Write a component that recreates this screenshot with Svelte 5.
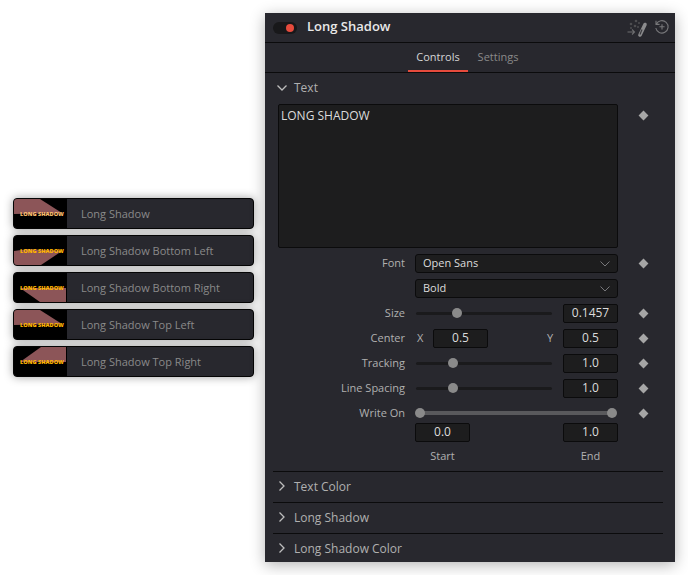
<script>
  const presets = [
    { name: 'Long Shadow', points: '0,0 26,0 48,14 0,15', pale: true },
    { name: 'Long Shadow Bottom Left', points: '0,15 14,13 48,15 27,29 0,29' },
    { name: 'Long Shadow Bottom Right', points: '6,15 26,29 52,29 52,15' },
    { name: 'Long Shadow Top Left', points: '0,0 26,0 48,14 0,15' },
    { name: 'Long Shadow Top Right', points: '6,15 27,0 52,0 52,15' }
  ];
  const sliders = [
    { label: 'Tracking', value: '1.0', pos: 27 },
    { label: 'Line Spacing', value: '1.0', pos: 27 }
  ];
  const closed = ['Text Color', 'Long Shadow', 'Long Shadow Color'];
</script>

{#snippet chevron(open)}
  <svg class="chev" width="10" height="10" viewBox="0 0 10 10">
    <path d={open ? 'M.5 2.5L5 7l4.5-4.5' : 'M2.5.5L7 5 2.5 9.5'} />
  </svg>
{/snippet}

{#snippet select(text)}
  <div class="select">
    <span>{text}</span>
    <svg width="10" height="6" viewBox="0 0 10 6"><path d="M.5.5L5 5 9.5.5" /></svg>
  </div>
{/snippet}

{#snippet slider(pos)}
  <div class="track"><i class="knob" style="left: {pos}%"></i></div>
{/snippet}

<main>
  <div class="presets">
    {#each presets as p}
      <div class="card">
        <div class="thumb">
          <svg width="52" height="29" viewBox="0 0 52 29"><polygon points={p.points} /></svg>
          <b class:pale={p.pale}>LONG SHADOW</b>
        </div>
        <span>{p.name}</span>
      </div>
    {/each}
  </div>

  <section class="panel">
    <header>
      <div class="toggle"><i></i></div>
      <h1>Long Shadow</h1>
      <svg class="wand" width="24" height="20" viewBox="0 0 24 20">
        <path class="stick" d="M18 6.5l-5 10.500" />
        <path class="core" d="M15 11.500l-2 5" />
        <path class="thin" d="M.5 14h7M5 11.500L7.500 14 5 16.500" />
        <circle cx="4" cy="6" r="1.300" /><circle cx="9" cy="3" r="1.300" /><circle cx="12" cy="5" r="1" />
        <circle cx="8" cy="8" r="1.300" /><circle cx="4" cy="10" r="1" /><circle cx="11" cy="9" r="1" />
      </svg>
      <svg class="reset" width="16" height="16" viewBox="0 0 16 16">
        <path d="M2.300 5.200A6.200 6.200 0 1 1 1.800 9M2 1.800v3.600h3.600M8 5.200v5.200M5.400 7.800h5.200" />
      </svg>
    </header>

    <nav>
      <span class="tab on">Controls</span>
      <span class="tab">Settings</span>
    </nav>

    <div class="body">
      <div class="head">{@render chevron(true)}Text</div>
      <div class="textrow">
        <div class="textbox">LONG SHADOW</div>
        <i class="diamond"></i>
      </div>

      <div class="form">
        <div class="row">
          <label>Font</label>
          {@render select('Open Sans')}
          <i class="diamond"></i>
        </div>
        <div class="row">
          <span></span>
          {@render select('Bold')}
        </div>
        <div class="row">
          <label>Size</label>
          <div class="ctl">{@render slider(30)}<div class="num">0.1457</div></div>
          <i class="diamond"></i>
        </div>
        <div class="row">
          <label>Center</label>
          <div class="ctl xy">
            <em>X</em><div class="num">0.5</div>
            <em class="y">Y</em><div class="num">0.5</div>
          </div>
          <i class="diamond"></i>
        </div>
        {#each sliders as s}
          <div class="row">
            <label>{s.label}</label>
            <div class="ctl">{@render slider(s.pos)}<div class="num">{s.value}</div></div>
            <i class="diamond"></i>
          </div>
        {/each}
        <div class="writeon">
          <div class="row">
            <label>Write On</label>
            <div class="range"><i class="knob a"></i><i class="knob b"></i></div>
            <i class="diamond"></i>
          </div>
          <div class="row">
            <span></span>
            <div class="ends"><div class="num">0.0</div><div class="num">1.0</div></div>
          </div>
          <div class="row caps">
            <span></span>
            <div class="ends"><small>Start</small><small>End</small></div>
          </div>
        </div>
      </div>

      {#each closed as name}
        <div class="head closed">{@render chevron(false)}{name}</div>
      {/each}
    </div>
  </section>
</main>

<style>
  :global(body) {
    background: #fff;
    font-family: "Open Sans", sans-serif;
  }

  main {
    display: flex;
    align-items: flex-start;
    gap: 11px;
    width: 688px;
    height: 575px;
    box-sizing: border-box;
    padding: 13px 0 0 13px;
    overflow: hidden;
  }

  .presets {
    display: flex;
    flex-direction: column;
    gap: 6px;
    width: 241px;
    margin-top: 185px;
  }

  .card {
    display: flex;
    align-items: center;
    height: 31px;
    box-sizing: border-box;
    background: #28282e;
    border: 1px solid #050505;
    border-radius: 4px;
    box-shadow: 0 0 10px rgba(0, 0, 0, 0.38);
    color: #8a8a8a;
    font-size: 11px;
    overflow: hidden;
  }

  .thumb {
    position: relative;
    flex: none;
    width: 53px;
    height: 29px;
    margin-right: 14px;
    background: #000;
  }

  .thumb svg {
    display: block;
  }

  .thumb polygon {
    fill: #8c5558;
  }

  .thumb b {
    position: absolute;
    left: 6px;
    top: 11px;
    font-size: 5.6px;
    font-weight: 800;
    line-height: 8px;
    white-space: nowrap;
    color: #ffb300;
  }

  .thumb b.pale {
    color: #fbbd6c;
  }

  .panel {
    width: 410px;
    height: 549px;
    background: #28282e;
    box-shadow: 0 3px 14px rgba(0, 0, 0, 0.3);
    overflow: hidden;
    color: #b0b0b0;
  }

  header {
    display: flex;
    align-items: center;
    height: 29px;
    padding: 0 5px 0 8px;
    border-bottom: 1px solid #0b0b0c;
  }

  .toggle {
    display: flex;
    align-items: center;
    justify-content: flex-end;
    width: 24px;
    height: 12px;
    border-radius: 6px;
    background: #18181a;
    box-sizing: border-box;
    padding-right: 3px;
  }

  .toggle i {
    width: 8px;
    height: 8px;
    border-radius: 50%;
    background: #e64b3d;
  }

  h1 {
    flex: 1;
    margin: 0 0 3px 10px;
    font-size: 13px;
    font-weight: 600;
    color: #e8e8e8;
  }

  .wand {
    margin-right: 3px;
  }

  .wand circle {
    fill: #4d4d50;
  }

  .wand .stick {
    stroke: #8b8b8d;
    stroke-width: 3.6;
    stroke-linecap: round;
    fill: none;
  }

  .wand .core {
    stroke: #3a3a3e;
    stroke-width: 1.2;
    fill: none;
  }

  .wand .thin {
    stroke: #6e6e70;
    stroke-width: 1.1;
    fill: none;
  }

  .reset {
    margin-bottom: 2px;
  }

  .reset path {
    stroke: #77777a;
    stroke-width: 1.1;
    fill: none;
  }

  nav {
    display: flex;
    justify-content: center;
    height: 29px;
    padding-right: 4px;
    border-bottom: 1px solid #0b0b0c;
  }

  .tab {
    display: flex;
    align-items: center;
    justify-content: center;
    width: 60px;
    box-sizing: border-box;
    padding-bottom: 2px;
    font-size: 11px;
    color: #8a8a8a;
  }

  .tab.on {
    color: #d6d6d6;
    border-bottom: 2px solid #e64b3d;
    padding: 0;
  }

  .body {
    padding: 0 12px 0 8px;
  }

  .head {
    display: flex;
    align-items: center;
    gap: 7px;
    height: 31px;
    box-sizing: border-box;
    padding: 0 0 2px 4px;
    font-size: 12px;
    color: #b0b0b0;
  }

  .head.closed {
    border-top: 1px solid #0b0b0c;
  }

  .chev {
    fill: none;
    stroke: #bdbdbd;
    stroke-width: 1.3;
  }

  .textrow {
    display: flex;
    align-items: flex-start;
    padding-left: 5px;
  }

  .textbox {
    width: 340px;
    height: 144px;
    box-sizing: border-box;
    padding: 2px;
    background: #1d1d1e;
    border: 1px solid #0b0b0c;
    border-radius: 2px;
    font-size: 12px;
    line-height: 17px;
    color: #dcdcdc;
  }

  .textrow .diamond {
    margin-top: 8px;
  }

  .diamond {
    flex: none;
    width: 7px;
    height: 7px;
    margin-left: 22px;
    background: #a6a6a6;
    transform: rotate(45deg);
  }

  .form {
    display: flex;
    flex-direction: column;
    gap: 6px;
    margin-top: 6px;
    height: 217px;
  }

  .row {
    display: grid;
    grid-template-columns: 132px 203px auto;
    column-gap: 10px;
    align-items: center;
    height: 19px;
    font-size: 11px;
  }

  .row .diamond {
    margin: 0 0 1px 12px;
  }

  label {
    text-align: right;
    white-space: nowrap;
    padding-bottom: 2px;
  }

  .select {
    display: flex;
    align-items: center;
    justify-content: space-between;
    height: 19px;
    box-sizing: border-box;
    padding: 0 7px;
    background: #1d1d1e;
    border: 1px solid #0b0b0c;
    border-radius: 3px;
    color: #dcdcdc;
  }

  .select span {
    padding-bottom: 2px;
  }

  .select svg {
    fill: none;
    stroke: #77777a;
    stroke-width: 1;
  }

  .ctl {
    display: flex;
    align-items: center;
    justify-content: space-between;
  }

  .track {
    position: relative;
    width: 136px;
    height: 3px;
    margin: 0 0 1px 1px;
    border-radius: 2px;
    background: #1a1a1c;
  }

  .knob {
    position: absolute;
    top: 50%;
    width: 10px;
    height: 10px;
    margin: -5px 0 0 -5px;
    border-radius: 50%;
    background: #8a8a8a;
  }

  .num {
    width: 55px;
    height: 19px;
    box-sizing: border-box;
    background: #1d1d1e;
    border: 1px solid #0b0b0c;
    border-radius: 2px;
    color: #dcdcdc;
    font-size: 12px;
    line-height: 15px;
    text-align: center;
  }

  .xy em {
    flex: none;
    width: 18px;
    padding: 0 0 2px 2px;
    box-sizing: border-box;
    font-style: normal;
  }

  .xy .y {
    width: 16px;
    margin-left: auto;
    padding: 0 0 2px;
    text-align: left;
  }

  .writeon {
    display: flex;
    flex-direction: column;
  }

  .range {
    position: relative;
    height: 4px;
    margin: 0 6px 1px 5px;
    background: #59595c;
  }

  .range .a {
    left: 0;
  }

  .range .b {
    left: 100%;
  }

  .ends {
    display: flex;
    justify-content: space-between;
  }

  .caps {
    margin-top: 4px;
  }

  small {
    width: 55px;
    font-size: 11px;
    text-align: center;
  }
</style>
